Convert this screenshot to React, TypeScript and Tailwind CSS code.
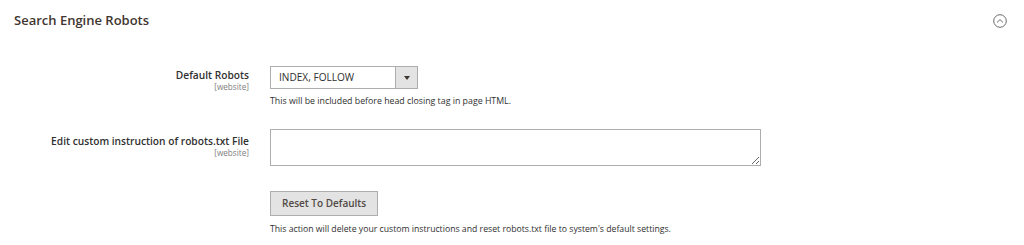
export default function App() {
  return (
    <div className="w-[1024px] h-[245px] bg-white overflow-hidden font-['Open_Sans',sans-serif] text-[#303030]">
      {/* Section header */}
      <div className="flex items-center justify-between pl-[14px] pr-[17px] pt-[10px] h-[30px]">
        <h2 className="text-[13px] font-semibold text-[#41362f] leading-[20px]">Search Engine Robots</h2>
        <svg width="14" height="14" viewBox="0 0 14 14" fill="none" className="mt-[1px]">
          <circle cx="7" cy="7" r="6.3" stroke="#6b6b6b" strokeWidth="1" />
          <path d="M4.3 8.2 L7 5.6 L9.7 8.2" stroke="#6b6b6b" strokeWidth="1" strokeLinecap="round" strokeLinejoin="round" />
        </svg>
      </div>

      <div className="pt-[36px]">
        {/* Default Robots */}
        <div className="flex">
          <div className="w-[249px] text-right pt-[2px]">
            <div className="text-[10.2px] font-semibold leading-[14px]">Default Robots</div>
            <div className="text-[8.2px] text-[#808080] leading-[9px]">[website]</div>
          </div>
          <div className="ml-[21px]">
            <div className="flex w-[148px] h-[23px] border border-[#adadad] bg-white">
              <div className="flex-1 pl-[8px] flex items-center text-[10.1px] text-[#303030]">INDEX, FOLLOW</div>
              <div className="w-[22px] bg-[#e3e3e3] border-l border-[#adadad] flex items-center justify-center">
                <div className="w-0 h-0 border-l-[3px] border-r-[3px] border-t-[4px] border-l-transparent border-r-transparent border-t-[#41362f]" />
              </div>
            </div>
            <div className="text-[8.8px] leading-[12px] mt-[6px]">This will be included before head closing tag in page HTML.</div>
          </div>
        </div>

        {/* robots.txt */}
        <div className="flex mt-[22px]">
          <div className="w-[249px] text-right pt-[5px]">
            <div className="text-[10.2px] font-semibold leading-[14px]">Edit custom instruction of robots.txt File</div>
            <div className="text-[8.2px] text-[#808080] leading-[9px]">[website]</div>
          </div>
          <div className="ml-[21px]">
            <textarea className="block w-[491px] h-[37px] border border-[#adadad] bg-white resize-y outline-none" />
            <button className="mt-[25px] h-[25px] px-[11px] bg-[#e3e3e3] border border-[#adadad] text-[10px] font-semibold text-[#514943]">
              Reset To Defaults
            </button>
            <div className="text-[8.7px] leading-[12px] mt-[7px]">
              This action will delete your custom instructions and reset robots.txt file to system's default settings.
            </div>
          </div>
        </div>
      </div>
    </div>
  );
}
